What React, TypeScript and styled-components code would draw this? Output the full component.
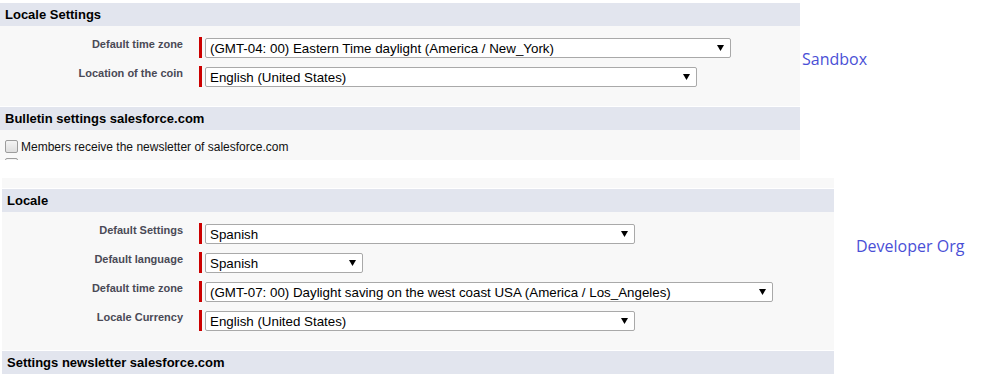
import React from "react";
import styled, { createGlobalStyle } from "styled-components";

const GlobalStyle = createGlobalStyle`
  html, body {
    margin: 0;
    padding: 0;
    background: #fff;
  }
  body {
    font-family: "Liberation Sans", Arial, sans-serif;
  }
`;

const Page = styled.div`
  padding-top: 2px;
  width: 984px;
  height: 390px;
  overflow: hidden;
`;

const Block = styled.div<{ $indent?: number; $gapTop?: number }>`
  display: flex;
  align-items: flex-start;
  margin-left: ${(p) => p.$indent ?? 0}px;
  margin-top: ${(p) => p.$gapTop ?? 0}px;
`;

const Panel = styled.div<{ $width: number }>`
  width: ${(p) => p.$width}px;
  background: #f8f8f8;
  flex-shrink: 0;
`;

const Strip = styled.div`
  height: 10px;
`;

const SectionHeader = styled.h3`
  margin: 0;
  height: 23px;
  line-height: 23px;
  border-top: 1px solid #fff;
  background: #e2e5ee;
  padding-left: 5px;
  font-size: 13px;
  font-weight: bold;
  color: #000;
`;

const FieldList = styled.div`
  display: flex;
  flex-direction: column;
  gap: 8px;
  padding: 11px 0 19px;
`;

const Row = styled.div`
  display: flex;
  align-items: flex-start;
  height: 21px;
`;

const Label = styled.label<{ $width: number }>`
  width: ${(p) => p.$width}px;
  text-align: right;
  font-size: 11px;
  font-weight: bold;
  color: #4a4a56;
  line-height: 13px;
  padding-top: 1px;
`;

const RequiredBar = styled.span`
  width: 3px;
  height: 21px;
  margin-left: 16px;
  background: #c00;
`;

const SelectBox = styled.div<{ $width: number }>`
  box-sizing: border-box;
  width: ${(p) => p.$width}px;
  height: 20px;
  margin: 1px 0 0 3px;
  padding: 0 6px 0 4px;
  display: flex;
  align-items: center;
  justify-content: space-between;
  background: #fff;
  border: 1px solid #a9a9a9;
  border-radius: 2px;
  font-size: 13.33px;
  color: #000;
  white-space: nowrap;
`;

const CheckList = styled.div`
  height: 30px;
  overflow: hidden;
  padding: 10px 0 0 5px;
  box-sizing: border-box;
  display: flex;
  flex-direction: column;
  gap: 5px;
`;

const CheckRow = styled.div`
  display: flex;
  align-items: center;
  gap: 3px;
  height: 13px;
  font-size: 12px;
  color: #111;
`;

const CheckBox = styled.span`
  box-sizing: border-box;
  width: 13px;
  height: 13px;
  border: 1px solid #9c9c9c;
  border-radius: 2px;
  background: linear-gradient(#f4f4f4, #dedede);
`;

const Note = styled.div<{ $offset: number; $top: number }>`
  margin-left: ${(p) => p.$offset}px;
  padding-top: ${(p) => p.$top}px;
  font-family: "Open Sans", "Noto Sans", sans-serif;
  font-size: 16px;
  line-height: 22px;
  color: #4a4fd6;
`;

const Arrow = () => (
  <svg width="7" height="6" viewBox="0 0 7 6">
    <path d="M0 0 H7 L3.5 6 Z" fill="#000" />
  </svg>
);

type Field = { label: string; value: string; width: number };

const Select: React.FC<{ value: string; width: number }> = ({ value, width }) => (
  <SelectBox $width={width}>
    <span>{value}</span>
    <Arrow />
  </SelectBox>
);

const Fields: React.FC<{ fields: Field[]; labelWidth: number }> = ({ fields, labelWidth }) => (
  <FieldList>
    {fields.map((f) => (
      <Row key={f.label}>
        <Label $width={labelWidth}>{f.label}</Label>
        <RequiredBar />
        <Select value={f.value} width={f.width} />
      </Row>
    ))}
  </FieldList>
);

const sandboxFields: Field[] = [
  { label: "Default time zone", value: "(GMT-04: 00) Eastern Time daylight (America / New_York)", width: 526 },
  { label: "Location of the coin", value: "English (United States)", width: 492 },
];

const devFields: Field[] = [
  { label: "Default Settings", value: "Spanish", width: 430 },
  { label: "Default language", value: "Spanish", width: 158 },
  { label: "Default time zone", value: "(GMT-07: 00) Daylight saving on the west coast USA (America / Los_Angeles)", width: 568 },
  { label: "Locale Currency", value: "English (United States)", width: 430 },
];

const App: React.FC = () => {
  return (
    <>
      <GlobalStyle />
      <Page>
        <Block>
          <Panel $width={800}>
            <SectionHeader>Locale Settings</SectionHeader>
            <Fields fields={sandboxFields} labelWidth={183} />
            <SectionHeader>Bulletin settings salesforce.com</SectionHeader>
            <CheckList>
              <CheckRow>
                <CheckBox />
                <span>Members receive the newsletter of salesforce.com</span>
              </CheckRow>
              <CheckRow>
                <CheckBox />
              </CheckRow>
            </CheckList>
          </Panel>
          <Note $offset={2} $top={46}>Sandbox</Note>
        </Block>
        <Block $indent={2} $gapTop={18}>
          <Panel $width={832}>
            <Strip />
            <SectionHeader>Locale</SectionHeader>
            <Fields fields={devFields} labelWidth={181} />
            <SectionHeader>Settings newsletter salesforce.com</SectionHeader>
          </Panel>
          <Note $offset={22} $top={57}>Developer Org</Note>
        </Block>
      </Page>
    </>
  );
};

export default App;
